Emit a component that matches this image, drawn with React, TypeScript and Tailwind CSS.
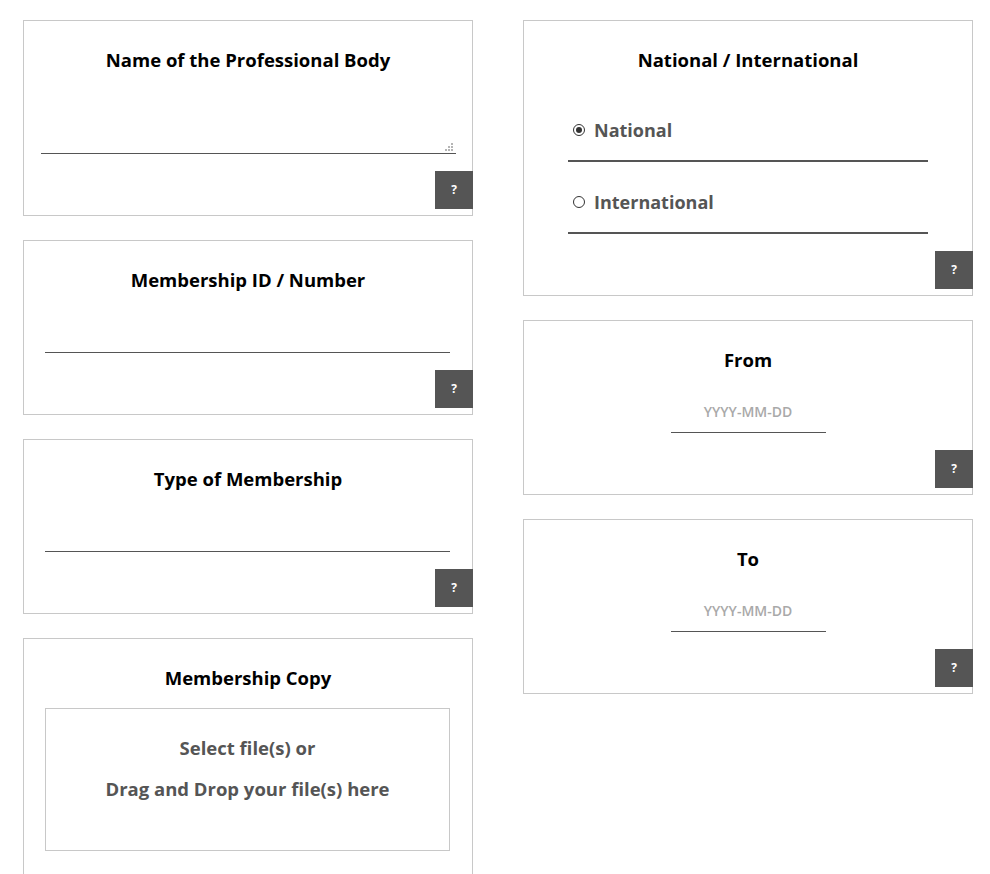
import React from 'react';

const font = { fontFamily: '"Open Sans", "Noto Sans", sans-serif' };

const HelpButton: React.FC = () => (
  <div className="mt-auto mb-[6px] -mr-px flex justify-end">
    <button
      type="button"
      title="Help"
      className="w-[38px] h-[38px] bg-[#555555] text-white text-[12px] font-bold flex items-center justify-center"
    >
      ?
    </button>
  </div>
);

const Title: React.FC<{ children: React.ReactNode }> = ({ children }) => (
  <h2 className="pt-[27px] text-center text-[18.5px] leading-[24px] font-bold text-black">{children}</h2>
);

const ResizeGrip: React.FC = () => (
  <svg width="9" height="9" viewBox="0 0 9 9" className="block">
    <rect x="7" y="1" width="2" height="2" fill="#b5b5b5" />
    <rect x="4" y="4" width="2" height="2" fill="#b5b5b5" />
    <rect x="7" y="4" width="2" height="2" fill="#b5b5b5" />
    <rect x="1" y="7" width="2" height="2" fill="#b5b5b5" />
    <rect x="4" y="7" width="2" height="2" fill="#b5b5b5" />
    <rect x="7" y="7" width="2" height="2" fill="#b5b5b5" />
  </svg>
);

const TextCard: React.FC<{ label: string }> = ({ label }) => (
  <section className="h-[175px] border border-[#c8c8c8] bg-white flex flex-col">
    <Title>{label}</Title>
    <div className="mt-[25px] pl-[21px] pr-[22px]">
      <input
        type="text"
        aria-label={label}
        className="w-full h-[36px] border-b border-[#555555] outline-none bg-transparent text-[16px] text-[#555555]"
      />
    </div>
    <HelpButton />
  </section>
);

const DateCard: React.FC<{ label: string }> = ({ label }) => (
  <section className="h-[175px] border border-[#c8c8c8] bg-white flex flex-col">
    <Title>{label}</Title>
    <div className="mt-[25px] flex justify-center">
      <input
        type="text"
        placeholder="YYYY-MM-DD"
        aria-label={label}
        className="w-[155px] h-[36px] pb-[7px] border-b border-[#555555] outline-none bg-transparent text-center text-[14px] font-semibold text-[#555555] placeholder:text-[#a9a9a9]"
      />
    </div>
    <HelpButton />
  </section>
);

const Radio: React.FC<{ checked?: boolean; label: string }> = ({ checked, label }) => (
  <label className="flex items-center h-[72px] pt-[29px] pb-[19px] pl-[5px] border-b-2 border-[#555555] cursor-pointer">
    <span className="w-[12px] h-[12px] rounded-full border border-[#333333] flex items-center justify-center shrink-0">
      {checked && <span className="w-[6px] h-[6px] rounded-full bg-[#333333]" />}
    </span>
    <span className="ml-[9px] text-[18px] leading-[24px] font-bold text-[#555555]">{label}</span>
  </label>
);

export default function App() {
  return (
    <div className="min-h-screen bg-white" style={font}>
      <div className="flex gap-[50px] pl-[23px] pt-[20px]">
        <div className="w-[450px] flex flex-col gap-[24px]">
          <section className="h-[196px] border border-[#c8c8c8] bg-white flex flex-col">
            <Title>Name of the Professional Body</Title>
            <div className="mt-[22px] pl-[17px] pr-[16px]">
              <div className="h-[60px] border-b border-[#555555] flex items-end justify-end pb-[2px] pr-[3px]">
                <ResizeGrip />
              </div>
            </div>
            <HelpButton />
          </section>

          <TextCard label="Membership ID / Number" />
          <TextCard label="Type of Membership" />

          <section className="h-[260px] border border-[#c8c8c8] bg-white flex flex-col">
            <Title>Membership Copy</Title>
            <div className="mt-[18px] ml-[21px] mr-[22px] h-[143px] border border-[#c8c8c8] text-center text-[18.5px] leading-[24px] font-bold text-[#555555] pt-[27px]">
              <p>Select file(s) or</p>
              <p className="mt-[17px]">Drag and Drop your file(s) here</p>
            </div>
          </section>
        </div>

        <div className="w-[450px] flex flex-col gap-[24px]">
          <section className="h-[276px] border border-[#c8c8c8] bg-white flex flex-col">
            <Title>National / International</Title>
            <div className="mt-[18px] ml-[44px] w-[360px]">
              <Radio checked label="National" />
              <Radio label="International" />
            </div>
            <HelpButton />
          </section>

          <DateCard label="From" />
          <DateCard label="To" />
        </div>
      </div>
    </div>
  );
}
